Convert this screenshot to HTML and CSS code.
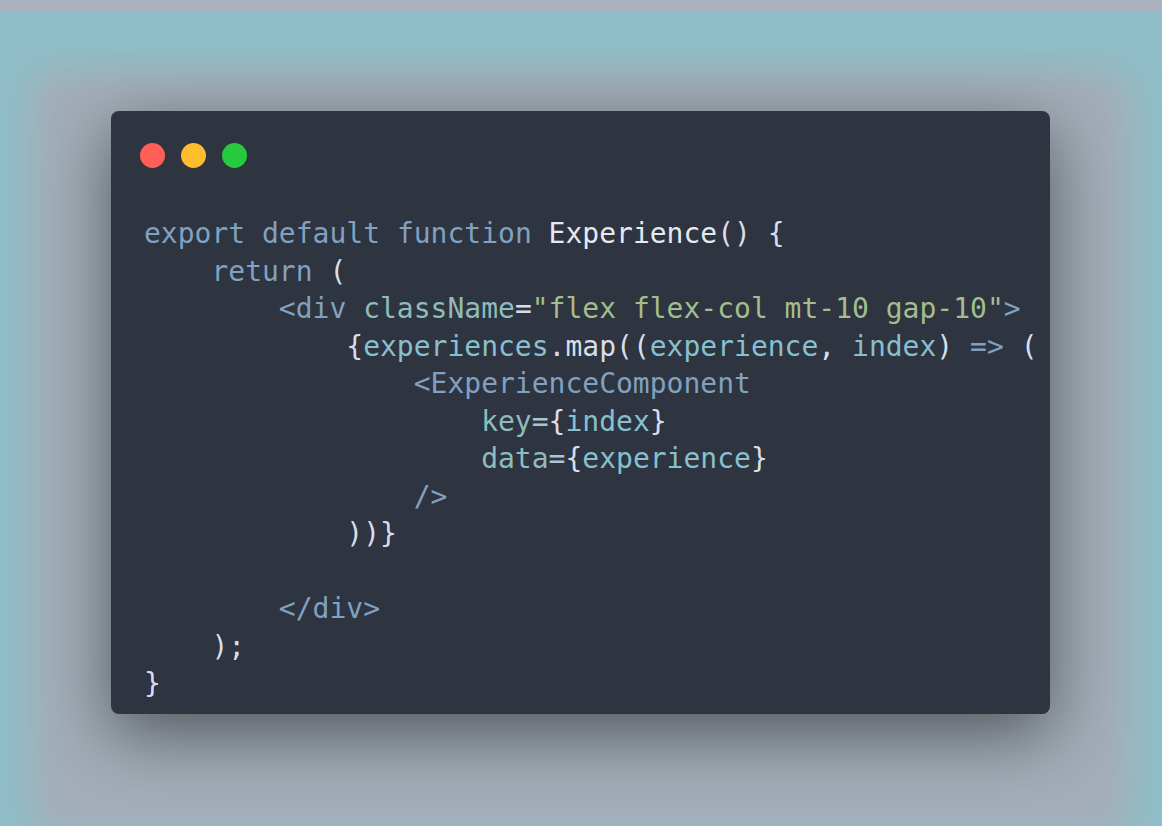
FILE: index.html
```html
<!DOCTYPE html>
<html lang="en">
<head>
<meta charset="utf-8">
<title>Experience</title>
<link rel="stylesheet" href="styles.css">
</head>
<body>
<div class="stage">
  <div class="window">
    <div class="dots">
      <span class="dot red"></span>
      <span class="dot yellow"></span>
      <span class="dot green"></span>
    </div>
<pre class="code"><span class="kw">export</span> <span class="kw">default</span> <span class="kw">function</span> <span class="fn">Experience</span><span class="p">() {</span>
    <span class="kw">return</span> <span class="p">(</span>
        <span class="tag">&lt;div</span> <span class="attr">className</span><span class="p">=</span><span class="str">"flex flex-col mt-10 gap-10"</span><span class="tag">&gt;</span>
            <span class="p">{</span><span class="var">experiences</span><span class="p">.map((</span><span class="var">experience</span><span class="p">, </span><span class="var">index</span><span class="p">) </span><span class="kw">=&gt;</span> <span class="p">(</span>
                <span class="tag">&lt;ExperienceComponent</span>
                    <span class="attr">key</span><span class="eq">=</span><span class="p">{</span><span class="var">index</span><span class="p">}</span>
                    <span class="attr">data</span><span class="eq">=</span><span class="p">{</span><span class="var">experience</span><span class="p">}</span>
                <span class="tag">/&gt;</span>
            <span class="p">))}</span>

        <span class="tag">&lt;/div&gt;</span>
    <span class="p">);</span>
<span class="p">}</span></pre>
  </div>
</div>
</body>
</html>
```

FILE: styles.css
```css
html, body {
  margin: 0;
  padding: 0;
}

body {
  width: 1162px;
  height: 826px;
  overflow: hidden;
  background: linear-gradient(#a9b2bd 0 11px, #8fbec8 11px 100%);
}

.stage {
  padding: 111px 0 0 111px;
}

.window {
  box-sizing: border-box;
  width: 939px;
  height: 603px;
  background: #2e3440;
  border-radius: 8px;
  padding: 32px 0 0 0;
  box-shadow:
    0 20px 68px rgba(0, 0, 0, 0.5),
    0 40px 34px 82px #a4aeb8;
}

.dots {
  display: flex;
  gap: 16px;
  padding-left: 29px;
}

.dot {
  width: 25px;
  height: 25px;
  border-radius: 50%;
}

.red { background: #ff5f56; }
.yellow { background: #ffbd2e; }
.green { background: #27c93f; }

.code {
  margin: 47px 0 0 0;
  padding-left: 33px;
  font-family: "DejaVu Sans Mono", "Liberation Mono", monospace;
  font-size: 28px;
  line-height: 37.5px;
  color: #d8dee9;
}

.kw { color: #81a1c1; }
.fn { color: #e5e9f0; }
.p { color: #d8dee9; }
.tag { color: #81a1c1; }
.attr { color: #8fbcbb; }
.eq { color: #a9c7d3; }
.str { color: #a3be8c; }
.var { color: #88c0d0; }
```
